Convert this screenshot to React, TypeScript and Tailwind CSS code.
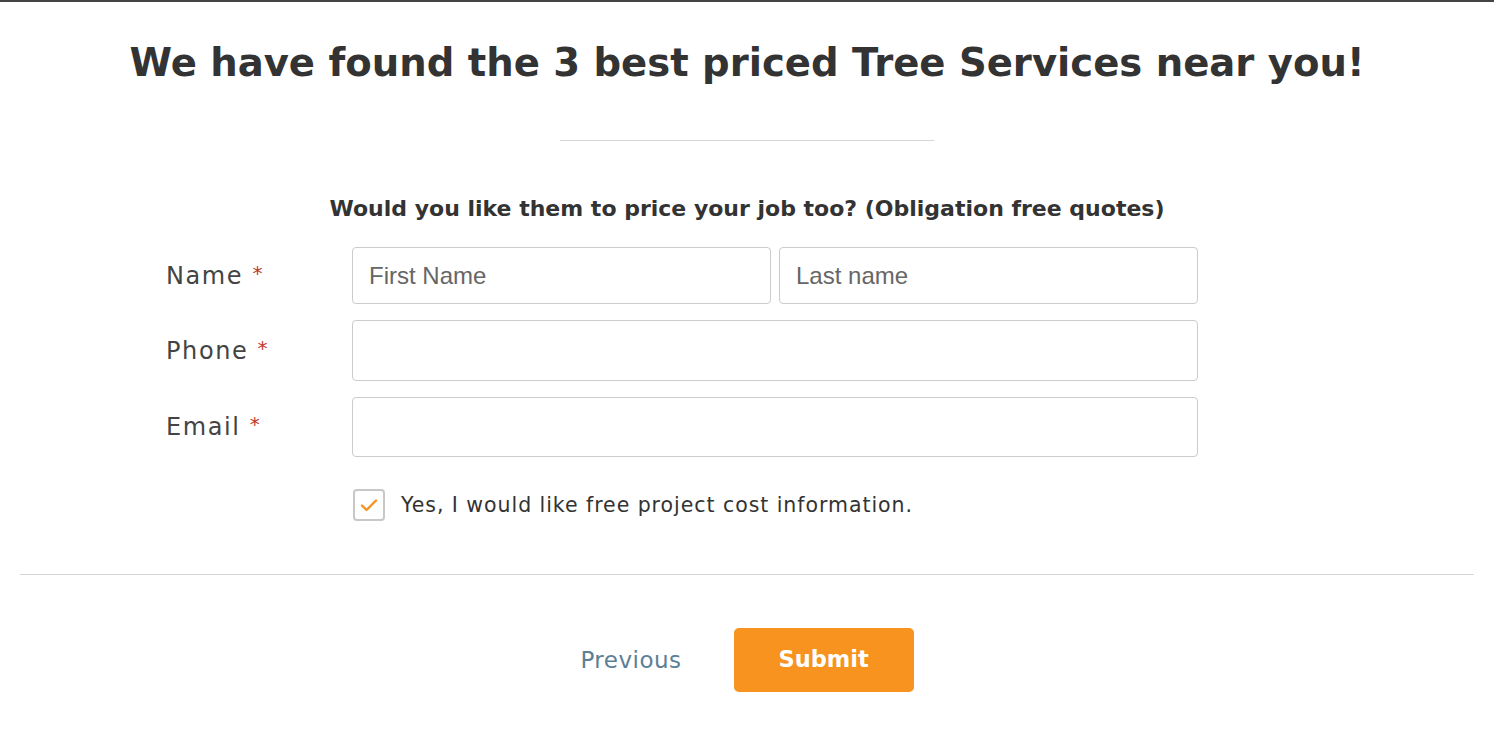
import React, { useState } from 'react';

const sans = { fontFamily: '"DejaVu Sans", "Open Sans", sans-serif' };
const arial = { fontFamily: '"Liberation Sans", Arial, sans-serif' };

function Label({ text }: { text: string }) {
  return (
    <div className="w-[186px] shrink-0 text-[24px] text-[#444] tracking-[1.6px]">
      {text} <span className="text-[#c0392b] text-[20px] align-top tracking-normal">*</span>
    </div>
  );
}

export default function App() {
  const [checked, setChecked] = useState(true);

  return (
    <div className="min-h-screen bg-white border-t-2 border-[#444]" style={sans}>
      <h1 className="pt-[36px] text-center text-[38.6px] leading-[50px] font-bold text-[#333]">
        We have found the 3 best priced Tree Services near you!
      </h1>

      <div className="mx-auto mt-[52px] h-px w-[374px] bg-[#d6d6d6]" />

      <p className="mt-[54px] text-center text-[22px] leading-[28px] font-bold text-[#333]">
        Would you like them to price your job too? (Obligation free quotes)
      </p>

      <form className="mx-auto mt-[24px] w-[1162px]" onSubmit={(e) => e.preventDefault()}>
        <div className="flex flex-col gap-[16px]">
          <div className="flex items-center">
            <Label text="Name" />
            <div className="flex w-[846px] gap-[8px]">
              <input
                placeholder="First Name"
                className="h-[57px] flex-1 rounded-[4px] border border-[#ccc] px-[16px] text-[24px] text-[#333] placeholder:text-[#666] outline-none"
                style={arial}
              />
              <input
                placeholder="Last name"
                className="h-[57px] flex-1 rounded-[4px] border border-[#ccc] px-[16px] text-[24px] text-[#333] placeholder:text-[#666] outline-none"
                style={arial}
              />
            </div>
          </div>
          <div className="flex items-center">
            <Label text="Phone" />
            <input className="h-[61px] w-[846px] rounded-[4px] border border-[#ccc] px-[16px] text-[24px] outline-none" style={arial} />
          </div>
          <div className="flex items-center">
            <Label text="Email" />
            <input className="h-[60px] w-[846px] rounded-[4px] border border-[#ccc] px-[16px] text-[24px] outline-none" style={arial} />
          </div>
        </div>

        <label className="mt-[32px] ml-[187px] flex items-center gap-[16px] cursor-pointer">
          <span
            onClick={() => setChecked(!checked)}
            className="flex h-[32px] w-[32px] items-center justify-center rounded-[4px] border-2 border-[#c8c8c8]"
          >
            {checked && (
              <svg width="18" height="14" viewBox="0 0 18 14" fill="none">
                <path d="M2 7.5 L6.5 12 L16 2.5" stroke="#f39422" strokeWidth="2.4" strokeLinecap="round" strokeLinejoin="round" />
              </svg>
            )}
          </span>
          <span className="text-[20.5px] text-[#333] tracking-[0.95px]">Yes, I would like free project cost information.</span>
        </label>
      </form>

      <div className="mx-[20px] mt-[53px] h-px bg-[#d6d6d6]" />

      <div className="mt-[53px] flex items-center justify-center gap-[52px]">
        <button className="text-[23px] tracking-[0.5px] text-[#5b8096]">Previous</button>
        <button className="h-[64px] w-[180px] rounded-[5px] bg-[#f7931e] text-[22.5px] font-bold text-white">
          Submit
        </button>
      </div>
    </div>
  );
}
